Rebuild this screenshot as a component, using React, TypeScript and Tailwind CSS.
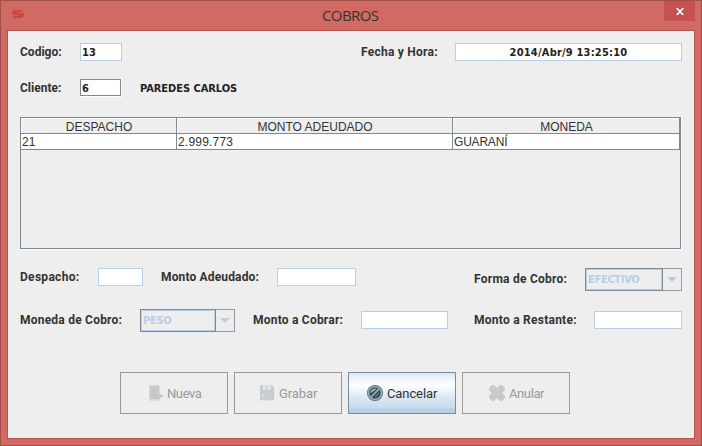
import type { ReactNode } from "react";

function Label({ className, children }: { className: string; children: ReactNode }) {
  return (
    <span
      className={`block shrink-0 whitespace-nowrap font-['Roboto',sans-serif] text-[12px] font-bold leading-[18px] text-[#333] ${className}`}
    >
      {children}
    </span>
  );
}

function Field({ className, children }: { className: string; children?: ReactNode }) {
  return (
    <div
      className={`h-[18px] shrink-0 whitespace-nowrap border border-[#b8cfe5] bg-white px-px font-['DejaVu_Sans_Condensed','DejaVu_Sans',sans-serif] text-[11px] font-bold leading-[17px] text-[#222] ${className}`}
    >
      {children}
    </div>
  );
}

function Combo({ className, children }: { className: string; children: ReactNode }) {
  return (
    <div className={`flex h-[23px] shrink-0 ${className}`}>
      <div className="flex-1 border border-[#7a8a99]">
        <div className="h-[21px] border border-[#b8cfe5] pl-px font-['DejaVu_Sans_Condensed','DejaVu_Sans',sans-serif] text-[11px] font-bold leading-[19px] tracking-[-0.3px] text-[#b8cfe5]">
          {children}
        </div>
      </div>
      <div className="flex w-[19px] items-center justify-center border border-l-0 border-[#999]">
        <svg width="10" height="5" viewBox="0 0 10 5" fill="#b8cfe5">
          <path d="M0 0H10L5 5Z" />
        </svg>
      </div>
    </div>
  );
}

function Button({ icon, active, className, children }: { icon: ReactNode; active?: boolean; className: string; children: ReactNode }) {
  return (
    <button
      className={`flex h-[42px] w-[108px] shrink-0 items-center border font-['Roboto',sans-serif] text-[13px] leading-[18px] ${
        active
          ? "border-[#7a8a99] bg-[linear-gradient(#dde8f3_0%,#fff_30%,#dde8f3_60%,#c8daeb_88%,#b8cfe5_90%)] text-[#333]"
          : "border-[#999] text-[#999]"
      } ${className}`}
    >
      {icon}
      <span className="pt-px">{children}</span>
    </button>
  );
}

const columns = [
  { title: "DESPACHO", value: "21", spacing: "" },
  { title: "MONTO ADEUDADO", value: "2.999.773", spacing: "tracking-[0.2px]" },
  { title: "MONEDA", value: "GUARANÍ", spacing: "tracking-[-0.2px]" },
];

export default function App() {
  return (
    <div className="flex h-[446px] w-[702px] flex-col border border-[#a04f49] bg-[#d16a63] px-[6px] pb-[6px]">
      <header className="flex h-[29px] shrink-0">
        <svg className="mt-[9px] ml-[5px]" width="12" height="9" viewBox="0 0 12 9">
          <path d="M2 0H10L11 2H6V3H12V6L10 8H1V6H6V5H0V2Z" fill="#cb4840" />
        </svg>
        <h1 className="ml-[7px] w-[633px] pl-[291px] font-['Open_Sans',sans-serif] text-[15px] leading-[28px] tracking-[-0.6px] text-[#333]">
          COBROS
        </h1>
        <button className="flex h-5 w-[31px] items-center justify-center bg-[#c75050]">
          <svg width="8" height="7" viewBox="0 0 8 7" stroke="#fff" strokeWidth="1.7">
            <path d="M.7 0L7.3 7M7.3 0L.7 7" />
          </svg>
        </button>
      </header>

      <main className="flex h-[409px] flex-col border border-[#b4544e] bg-[#eee] px-3 pt-3">
        <div className="flex h-[18px]">
          <Label className="w-[60px]">Codigo:</Label>
          <Field className="w-[42px]">13</Field>
          <Label className="ml-[239px] w-[94px] tracking-[0.25px]">Fecha y Hora:</Label>
          <Field className="w-[227px] text-center tracking-[0.2px]">2014/Abr/9 13:25:10</Field>
        </div>

        <div className="mt-[18px] flex h-[18px]">
          <Label className="w-[60px]">Cliente:</Label>
          <div className="h-[18px] w-[42px] border-r border-b border-white">
            <div className="h-[17px] w-[41px] border border-[#7a8a99] bg-white pl-px font-['DejaVu_Sans_Condensed','DejaVu_Sans',sans-serif] text-[11px] font-bold leading-[17px] text-[#222]">
              6
            </div>
          </div>
          <span className="ml-[18px] font-['DejaVu_Sans_Condensed','DejaVu_Sans',sans-serif] text-[11px] font-bold leading-[20px] tracking-[-0.05px] text-[#222]">
            PAREDES CARLOS
          </span>
        </div>

        <div className="mt-5 h-[133px] w-[662px] shrink-0 border-r border-b border-white">
          <div className="h-[132px] w-[661px] border border-[#7a8a99]">
            <div className="grid grid-cols-[156px_276px_227px] font-['Liberation_Sans',Arial,sans-serif] text-[12px] text-[#333]">
              {columns.map((c) => (
                <div key={c.title} className="h-4 border-r border-b border-[#7a8a99]">
                  <div className="h-[15px] border-t border-l border-white text-center leading-[17px]">{c.title}</div>
                </div>
              ))}
              {columns.map((c) => (
                <div
                  key={c.value}
                  className={`h-4 border-r border-b border-[#7a8a99] bg-white pl-px leading-[16px] ${c.spacing}`}
                >
                  {c.value}
                </div>
              ))}
            </div>
          </div>
        </div>

        <div className="mt-[18px] flex h-[23px] shrink-0">
          <Label className="w-[78px] tracking-[0.3px]">Despacho:</Label>
          <Field className="w-[45px]" />
          <Label className="ml-[18px] w-[116px] tracking-[0.15px]">Monto Adeudado:</Label>
          <Field className="w-[79px]" />
          <Label className="ml-[118px] w-[111px] pt-[2px] tracking-[0.25px]">Forma de Cobro:</Label>
          <Combo className="w-[97px]">EFECTIVO</Combo>
        </div>

        <div className="mt-[18px] flex h-[23px] shrink-0">
          <Label className="w-[120px] pt-[2px] tracking-[0.22px]">Moneda de Cobro:</Label>
          <Combo className="w-[95px]">PESO</Combo>
          <Label className="ml-[18px] w-[108px] pt-[2px] tracking-[0.22px]">Monto a Cobrar:</Label>
          <Field className="mt-[2px] w-[87px]" />
          <Label className="ml-[26px] w-[120px] pt-[2px] tracking-[0.25px]">Monto a Restante:</Label>
          <Field className="mt-[2px] w-[88px]" />
        </div>

        <div className="mt-10 ml-[100px] flex gap-[6px]">
          <Button
            className="pl-[28px] tracking-[-0.4px]"
            icon={
              <svg className="mr-[3px] shrink-0" width="15" height="16" viewBox="0 0 15 16">
                <path d="M0 0H11V9L14 10V12L11 14V16H0Z" fill="#d5dee6" />
                <path d="M1 1H10V9H12V10H14V12H11V14H1Z" fill="#c8c8c8" />
              </svg>
            }
          >
            Nueva
          </Button>
          <Button
            className="pl-[25px] tracking-[-0.1px]"
            icon={
              <svg className="mr-1 shrink-0" width="15" height="16" viewBox="0 0 15 16">
                <path d="M0 0H12L14 2V16H0Z" fill="#c8cccf" />
                <path d="M3 0H5V5H3ZM8 0H10V5H8Z" fill="#e4e8ec" />
                <path d="M5 0H8V5H5ZM10 0H12V4H10Z" fill="#cfd9e5" />
                <path d="M2 9H3V12H2ZM2 9H5V10H2ZM0 15H14V16H0Z" fill="#dce4ec" />
                <path d="M14 9H15V10H14Z" fill="#c8c8c8" />
              </svg>
            }
          >
            Grabar
          </Button>
          <Button
            active
            className="pl-[18px] tracking-[-0.1px]"
            icon={
              <svg className="mr-1 shrink-0" width="16" height="16" viewBox="0 0 16 16">
                <circle cx="8" cy="8" r="8" fill="#536b76" />
                <circle cx="8" cy="8" r="6.5" fill="none" stroke="#92a9b1" strokeWidth="1.6" />
                <circle cx="8" cy="8" r="5" fill="#26343c" />
                <path d="M3.5 8.5A4.6 4.6 0 0 1 8 3.5L9.5 4Z" fill="#a9bdc4" />
                <path d="M4 12L12 4" stroke="#8fa8b1" strokeWidth="2.2" />
                <path d="M8 12L12 8" stroke="#6e8893" strokeWidth="1.6" />
              </svg>
            }
          >
            Cancelar
          </Button>
          <Button
            className="pl-[26px] tracking-[-0.4px]"
            icon={
              <svg className="mr-1 shrink-0" width="16" height="16" viewBox="0 0 16 16">
                <path
                  d="M3 0H5L8 3L11 0H13L16 3V5L13 8L16 11V13L13 16H11L8 13L5 16H3L0 13V11L3 8L0 5V3Z"
                  fill="#c9c9c7"
                />
              </svg>
            }
          >
            Anular
          </Button>
        </div>
      </main>
    </div>
  );
}
